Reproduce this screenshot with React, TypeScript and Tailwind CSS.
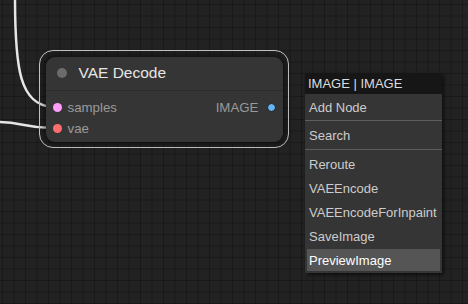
import React from "react";

export default function App() {
  const font = { fontFamily: '"Liberation Sans", Arial, sans-serif' };
  return (
    <div
      className="relative w-[468px] h-[304px] overflow-hidden bg-[#222222] bg-[image:linear-gradient(to_right,rgba(0,0,0,0.24)_1px,transparent_1px),linear-gradient(to_bottom,rgba(0,0,0,0.24)_1px,transparent_1px)] bg-[size:11.5px_11.5px] bg-[position:2px_4px]"
      style={font}
    >
      {/* wires */}
      <svg className="absolute left-0 top-0" width="468" height="304">
        <path d="M 15 -2 C 15 70, 20 104, 52 107" stroke="#e6e6e6" strokeWidth="2.5" fill="none" />
        <path d="M -2 122 C 22 122, 24 128, 52 128" stroke="#e6e6e6" strokeWidth="2.5" fill="none" />
      </svg>

      {/* node with selection outline */}
      <div className="absolute left-[39px] top-[50px] w-[250px] h-[98px] rounded-[14px] border-[1.5px] border-[#c8c8c8] p-[5.5px]">
        <div className="h-[85px] rounded-[9px] bg-[#353535] shadow-[0_0_6px_2px_rgba(0,0,0,0.55)] flex flex-col">
          <div className="h-[34px] flex items-center pl-[11px] border-b border-[#2c2c2c]">
            <div className="w-[10px] h-[10px] rounded-full bg-[#6b6b6b]" />
            <span className="ml-[12px] text-[15.5px] text-[#e6e6e6] leading-none">VAE Decode</span>
          </div>
          <div className="pt-[7px] flex flex-col gap-[1px]">
            <div className="h-[20px] flex items-center pl-[7px] pr-[7px]">
              <div className="w-[9px] h-[9px] rounded-full bg-[#ff9cf9]" />
              <span className="ml-[6px] text-[13.3px] text-[#9a9a9a] leading-none">samples</span>
              <span className="ml-auto text-[13.3px] text-[#9a9a9a] leading-none">IMAGE</span>
              <div className="ml-[8px] w-[9px] h-[9px] rounded-full bg-[#64b5f6] border border-[#1a1a1a]" />
            </div>
            <div className="h-[20px] flex items-center pl-[7px]">
              <div className="w-[9px] h-[9px] rounded-full bg-[#ff6e6e]" />
              <span className="ml-[6px] text-[13.3px] text-[#9a9a9a] leading-none">vae</span>
            </div>
          </div>
        </div>
      </div>

      {/* context menu */}
      <div className="absolute left-[305px] top-[73px] w-[137px] bg-[#353535] shadow-[2px_2px_4px_rgba(0,0,0,0.6)] text-[13px] text-[#cccccc] leading-none pb-[1px]">
        <div className="h-[21px] bg-[#161616] text-[#dddddd] flex items-center pl-[3px]">IMAGE | IMAGE</div>
        <div className="h-[27px] flex items-center pl-[4px] border-b border-[#5e5e5e]">Add Node</div>
        <div className="h-[29px] flex items-center pl-[4px] border-b border-[#5e5e5e]">Search</div>
        <div className="flex flex-col px-[2px] pt-[2px]">
          <div className="h-[22px] my-[1px] flex items-center pl-[2px]">Reroute</div>
          <div className="h-[22px] my-[1px] flex items-center pl-[2px]">VAEEncode</div>
          <div className="h-[22px] my-[1px] flex items-center pl-[2px] whitespace-nowrap">VAEEncodeForInpaint</div>
          <div className="h-[22px] my-[1px] flex items-center pl-[2px]">SaveImage</div>
          <div className="h-[22px] my-[1px] flex items-center pl-[2px] bg-[#555555] text-white">PreviewImage</div>
        </div>
      </div>
    </div>
  );
}
